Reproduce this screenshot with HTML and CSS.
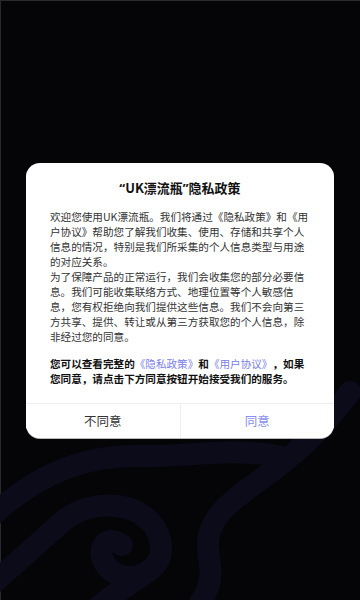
FILE: index.html
```html
<!DOCTYPE html>
<html lang="zh-CN">
<head>
    <meta charset="UTF-8">
    <meta name="viewport" content="width=device-width, initial-scale=1.0">
    <title>隐私政策</title>
    <link rel="stylesheet" href="styles.css">
</head>
<body>
    <div class="screen">
        <!-- background swirls -->
        <svg class="swirl" width="360" height="600" viewBox="0 0 360 600">
            <path d="M-10 518 C 40 470, 90 455, 140 456 C 190 457, 240 446, 286 458" />
            <path d="M350 392 C 325 425, 305 445, 286 460 C 250 490, 216 505, 209 535 C 203 560, 222 572, 198 606" />
            <path d="M-12 588 L 62 522 C 92 496, 150 500, 160 540 C 168 572, 128 588, 108 568 C 94 553, 104 532, 122 545" />
            <path d="M150 570 C 130 585, 110 595, 95 610" />
        </svg>

        <div class="dialog">
            <h2 class="dialog-title"><span class="q">“</span>UK漂流瓶<span class="q">”</span>隐私政策</h2>
            <p class="dialog-text">
                欢迎您使用UK漂流瓶。我们将通过《隐私政策》和《用户协议》帮助您了解我们收集、使用、存储和共享个人信息的情况，特别是我们所采集的个人信息类型与用途的对应关系。<br>为了保障产品的正常运行，我们会收集您的部分必要信息。我们可能收集联络方式、地理位置等个人敏感信息，您有权拒绝向我们提供这些信息。我们不会向第三方共享、提供、转让或从第三方获取您的个人信息，除非经过您的同意。
            </p>
            <p class="dialog-text strong">
                您可以查看完整的<a href="#" class="link">《隐私政策》</a>和<a href="#" class="link">《用户协议》</a>，如果您同意，请点击下方同意按钮开始接受我们的服务。
            </p>
            <div class="dialog-actions">
                <button class="btn btn-cancel">不同意</button>
                <button class="btn btn-ok">同意</button>
            </div>
        </div>
    </div>
</body>
</html>
```

FILE: styles.css
```css
/* Page */
body {
    margin: 0;
    padding: 0;
    background: #050508;
    font-family: "Noto Sans CJK SC", "Noto Sans", sans-serif;
    color: #333;
}

.screen {
    position: relative;
    width: 360px;
    height: 600px;
    display: flex;
    align-items: center;
    justify-content: center;
    overflow: hidden;
    box-shadow: inset 1px 1px 0 #2a2a2e;
}

.swirl {
    position: absolute;
    left: 0;
    top: 0;
}

.swirl path {
    fill: none;
    stroke: #0b0b19;
    stroke-width: 22;
    stroke-linecap: round;
    stroke-linejoin: round;
}

/* Dialog */
.dialog {
    position: relative;
    width: 308px;
    background: #fff;
    border-radius: 14px;
    box-shadow: 0 1px 0 #bbb;
    overflow: hidden;
}

.dialog-title {
    margin: 0;
    padding: 16px 24px 0;
    font-size: 13px;
    line-height: 18px;
    font-weight: bold;
    text-align: center;
    color: #111;
}

.dialog-title .q {
    font-family: "Noto Sans", sans-serif;
}

.dialog-text {
    margin: 12px 24px 0;
    font-size: 10.6px;
    line-height: 15px;
    color: #333;
    text-spacing-trim: space-all;
}

.dialog-text.strong {
    font-weight: bold;
    color: #111;
    margin-bottom: 17px;
}

.link {
    color: #7b80e8;
    font-weight: normal;
    text-decoration: none;
}

.dialog-actions {
    display: flex;
    border-top: 1px solid #eee;
}

.btn {
    flex: 1;
    height: 34px;
    border: none;
    background: #fff;
    font-family: inherit;
    font-size: 12.5px;
    padding: 0;
    cursor: pointer;
}

.btn-cancel {
    color: #333;
    border-right: 1px solid #eee;
}

.btn-ok {
    color: #8a8ef0;
}
```
